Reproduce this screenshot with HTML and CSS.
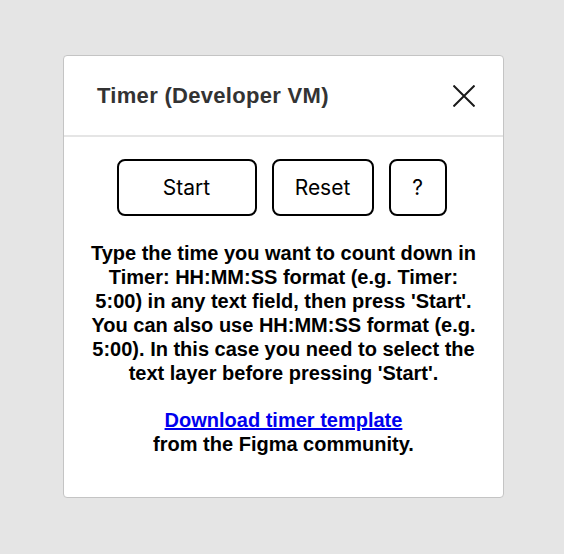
FILE: index.html
```html
<!DOCTYPE html>
<html>
<head>
<meta charset="utf-8">
<link rel="stylesheet" href="styles.css">
</head>
<body>
<div class="dialog">
  <div class="header">
    <h1 class="title">Timer (Developer VM)</h1>
    <button class="close" aria-label="Close">
      <svg width="22" height="22" viewBox="0 0 22 22"><path d="M0.5 0.5L21.5 21.5M21.5 0.5L0.5 21.5" stroke="#1a1a1a" stroke-width="2" fill="none"/></svg>
    </button>
  </div>
  <div class="content">
    <div class="buttons">
      <button class="btn btn-start">Start</button>
      <button class="btn btn-reset">Reset</button>
      <button class="btn btn-help">?</button>
    </div>
    <p class="info">Type the time you want to count down in Timer: HH:MM:SS format (e.g. Timer: 5:00) in any text field, then press 'Start'. You can also use HH:MM:SS format (e.g. 5:00). In this case you need to select the text layer before pressing 'Start'.</p>
    <p class="info community"><a href="#">Download timer template</a><br>from the Figma community.</p>
  </div>
</div>
</body>
</html>
```
FILE: styles.css
```css
html, body {
  margin: 0;
  padding: 0;
}
body {
  background: #e5e5e5;
  width: 564px;
  height: 554px;
  display: flex;
  align-items: flex-start;
  justify-content: flex-start;
}
.dialog {
  margin: 55px 0 0 63px;
  width: 441px;
  height: 443px;
  background: #fff;
  border: 1px solid #c4c4c4;
  border-radius: 4px;
  box-sizing: border-box;
  display: flex;
  flex-direction: column;
}
.header {
  height: 81px;
  border-bottom: 2px solid #e5e5e5;
  display: flex;
  align-items: center;
  justify-content: space-between;
  padding: 0 28px 0 33px;
  box-sizing: border-box;
}
.title {
  margin: 0;
  font-family: "Liberation Sans", Arial, sans-serif;
  font-weight: 700;
  font-size: 22px;
  letter-spacing: 0.3px;
  color: #333;
}
.close {
  background: none;
  border: 0;
  padding: 0;
  width: 22px;
  height: 22px;
  display: flex;
}
.content {
  padding: 22px 20px 0;
  display: flex;
  flex-direction: column;
  align-items: center;
}
.buttons {
  display: flex;
  gap: 15px;
  margin-right: 4px;
}
.btn {
  height: 57px;
  border: 2px solid #000;
  border-radius: 8px;
  background: #fff;
  font-family: Inter, "Noto Sans", sans-serif;
  font-size: 21px;
  color: #000;
  padding: 0;
}
.btn-start { width: 140px; }
.btn-reset { width: 102px; }
.btn-help { width: 58px; }
.info {
  margin: 25px 0 0;
  font-family: "Liberation Sans", Arial, sans-serif;
  font-weight: 700;
  font-size: 20px;
  line-height: 24px;
  text-align: center;
  color: #000;
}
.community {
  margin-top: 23px;
}
.community a {
  color: #0000ee;
  text-decoration: underline;
}
```
